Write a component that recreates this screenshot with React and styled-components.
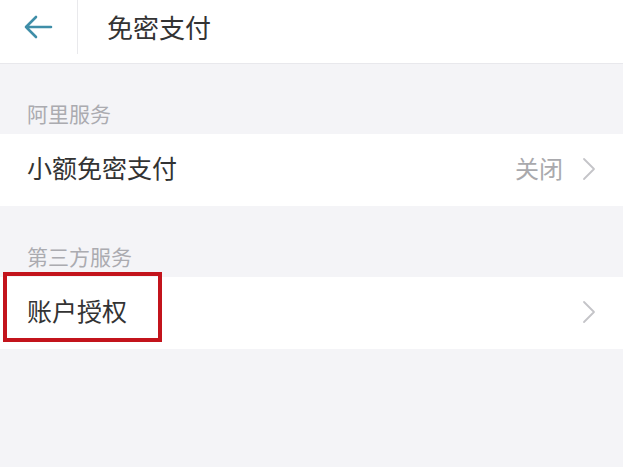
import React from "react";
import styled, { createGlobalStyle } from "styled-components";

const Global = createGlobalStyle`
  html, body { margin: 0; padding: 0; background: #ffffff; }
  body { font-family: "Noto Sans CJK SC", "Noto Sans", sans-serif; }
`;

const Page = styled.div`
  width: 623px;
  height: 467px;
  background: #f4f4f7;
  display: flex;
  flex-direction: column;
  overflow: hidden;
`;

const Header = styled.header`
  height: 63px;
  background: #ffffff;
  border-bottom: 1px solid #e8e8ec;
  display: flex;
  align-items: center;
  flex-shrink: 0;
`;

const BackButton = styled.div`
  width: 78px;
  height: 54px;
  display: flex;
  align-items: center;
  padding-left: 23px;
  box-sizing: border-box;
  border-right: 1px solid #e9e9ec;
  margin-top: -10px;
`;

const Title = styled.h1`
  margin: -10px 0 0 29px;
  font-size: 26px;
  font-weight: 400;
  color: #333333;
  line-height: 1;
`;

const SectionLabel = styled.div`
  height: ${(p) => p.h}px;
  box-sizing: border-box;
  padding-left: 27px;
  display: flex;
  align-items: flex-end;
  padding-bottom: 10px;
  font-size: 21px;
  color: #ababb0;
  line-height: 1;
`;

const Row = styled.div`
  height: 72px;
  background: #ffffff;
  display: flex;
  align-items: center;
  padding: 0 26px 0 27px;
  box-sizing: border-box;
  position: relative;
`;

const RowText = styled.span`
  font-size: 25px;
  color: #333333;
  line-height: 1;
  flex: 1;
  margin-top: -5px;
`;

const RowValue = styled.span`
  font-size: 24px;
  color: #a9a9ad;
  line-height: 1;
  margin-right: 18px;
  margin-top: -5px;
`;

const Highlight = styled.div`
  position: absolute;
  left: 3px;
  top: -5px;
  width: 159px;
  height: 70px;
  border: 4px solid #c3141c;
  box-sizing: border-box;
`;

const Chevron = () => (
  <svg width="16" height="24" viewBox="0 0 16 24" fill="none" style={{ marginTop: -2 }}>
    <path d="M3 2 L13 12 L3 22" stroke="#c4c4c8" strokeWidth="1.8" strokeLinecap="round" strokeLinejoin="round" />
  </svg>
);

const BackArrow = () => (
  <svg width="30" height="26" viewBox="0 0 30 26" fill="none">
    <path d="M28 13 H3 M13 3 L3 13 L13 23" stroke="#3f8ea8" strokeWidth="2.6" strokeLinecap="round" strokeLinejoin="round" />
  </svg>
);

export default function App() {
  return (
    <>
      <Global />
      <Page>
        <Header>
          <BackButton>
            <BackArrow />
          </BackButton>
          <Title>免密支付</Title>
        </Header>
        <SectionLabel h={70}>阿里服务</SectionLabel>
        <Row>
          <RowText>小额免密支付</RowText>
          <RowValue>关闭</RowValue>
          <Chevron />
        </Row>
        <SectionLabel h={71}>第三方服务</SectionLabel>
        <Row>
          <RowText>账户授权</RowText>
          <Chevron />
          <Highlight />
        </Row>
      </Page>
    </>
  );
}
